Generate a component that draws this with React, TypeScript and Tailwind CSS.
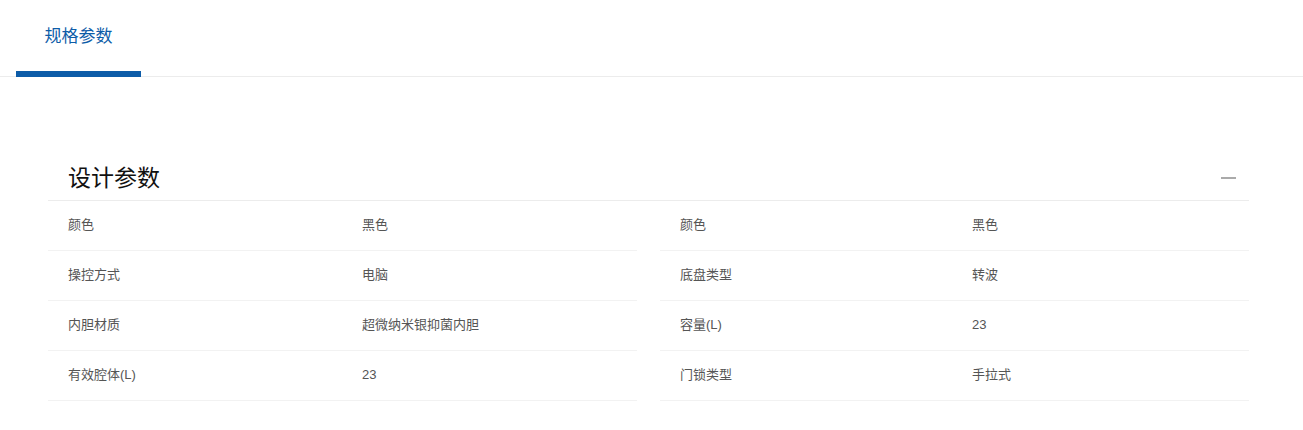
import React from "react";

const left = [
  ["颜色", "黑色"],
  ["操控方式", "电脑"],
  ["内胆材质", "超微纳米银抑菌内胆"],
  ["有效腔体(L)", "23"],
];
const right = [
  ["颜色", "黑色"],
  ["底盘类型", "转波"],
  ["容量(L)", "23"],
  ["门锁类型", "手拉式"],
];

function Row({ k, v, w }: { k: string; v: string; w: string }) {
  return (
    <div className="flex h-[50px] items-center border-b border-[#f2f2f2] pb-px text-[13px] text-[#555]">
      <div className={w + " pl-5"}>{k}</div>
      <div className="pl-5">{v}</div>
    </div>
  );
}

export default function App() {
  return (
    <div
      className="w-[1303px] h-[430px] bg-white"
      style={{ fontFamily: "'Liberation Sans', 'Noto Sans CJK SC', sans-serif" }}
    >
      <div className="flex h-[77px] items-start border-b border-[#ececec] pl-4">
        <div className="flex h-[77px] w-[125px] items-center justify-center border-b-[6px] border-[#0d5ca8] pt-[3px] text-[17px] text-[#0d5ca8]">
          规格参数
        </div>
      </div>
      <div className="pl-12 pr-[54px] pt-[79px]">
        <div className="flex h-[45px] items-center justify-between border-b border-[#ececec] pl-5 pr-[13px]">
          <div className="text-[23px] text-[#111]">设计参数</div>
          <div className="h-[2px] w-[15px] bg-[#aaa]" />
        </div>
        <div className="grid grid-cols-2 gap-x-[23px]">
          <div className="flex flex-col">
            {left.map(([k, v]) => (
              <Row key={k} k={k} v={v} w="w-[294px]" />
            ))}
          </div>
          <div className="flex flex-col">
            {right.map(([k, v]) => (
              <Row key={k} k={k} v={v} w="w-[292px]" />
            ))}
          </div>
        </div>
      </div>
    </div>
  );
}
